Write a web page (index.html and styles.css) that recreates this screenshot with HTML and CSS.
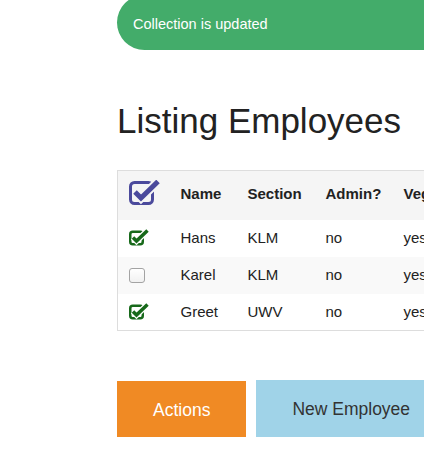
FILE: index.html
```html
<!DOCTYPE html>
<html>
<head>
<meta charset="utf-8">
<link rel="stylesheet" href="styles.css">
</head>
<body>
<div class="viewport">
  <div class="page">
    <div class="alert">Collection is updated</div>
    <h1 class="title">Listing Employees</h1>
    <table class="grid">
      <colgroup>
        <col class="c-check"><col class="c-name"><col class="c-section"><col class="c-admin"><col class="c-veg"><col class="c-rest">
      </colgroup>
      <thead>
        <tr>
          <th>
            <svg class="icon-all" width="32" height="29" viewBox="0 0 32 29">
              <rect x="2.5" y="2.5" width="22" height="21" rx="4" fill="none" stroke="#4b4a9c" stroke-width="3"/>
              <polyline points="7,12 13,18 30,1.5" fill="none" stroke="#f5f5f5" stroke-width="9"/>
              <polyline points="7,12 13,18 30,1.5" fill="none" stroke="#4b4a9c" stroke-width="5"/>
            </svg>
          </th>
          <th>Name</th>
          <th>Section</th>
          <th>Admin?</th>
          <th>Vegetarian?</th>
          <th>Actions</th>
        </tr>
      </thead>
      <tbody>
        <tr>
          <td>
            <svg class="icon-row" width="22" height="18" viewBox="0 0 22 18">
              <rect x="2.25" y="2.75" width="12.5" height="12.5" rx="2.5" fill="none" stroke="#17691a" stroke-width="2.5"/>
              <polyline points="5,8.5 8.5,12 19.5,1.5" fill="none" stroke="#ffffff" stroke-width="6"/>
              <polyline points="5,8.5 8.5,12 19.5,1.5" fill="none" stroke="#17691a" stroke-width="3.5"/>
            </svg>
          </td>
          <td>Hans</td><td>KLM</td><td>no</td><td>yes</td><td>edit</td>
        </tr>
        <tr>
          <td><span class="box"></span></td>
          <td>Karel</td><td>KLM</td><td>no</td><td>yes</td><td>edit</td>
        </tr>
        <tr>
          <td>
            <svg class="icon-row" width="22" height="18" viewBox="0 0 22 18">
              <rect x="2.25" y="2.75" width="12.5" height="12.5" rx="2.5" fill="none" stroke="#17691a" stroke-width="2.5"/>
              <polyline points="5,8.5 8.5,12 19.5,1.5" fill="none" stroke="#ffffff" stroke-width="6"/>
              <polyline points="5,8.5 8.5,12 19.5,1.5" fill="none" stroke="#17691a" stroke-width="3.5"/>
            </svg>
          </td>
          <td>Greet</td><td>UWV</td><td>no</td><td>yes</td><td>edit</td>
        </tr>
      </tbody>
    </table>
    <div class="buttons">
      <a class="btn btn-actions">Actions</a>
      <a class="btn btn-new">New Employee</a>
    </div>
  </div>
</div>
</body>
</html>
```
FILE: styles.css
```css
html, body {
  margin: 0;
  padding: 0;
  background: #ffffff;
  overflow: hidden;
}
.viewport {
  width: 424px;
  height: 464px;
  overflow: hidden;
}
.page {
  margin-left: 117px;
  width: 700px;
  font-family: "Liberation Sans", Arial, sans-serif;
  color: #222222;
}
.alert {
  margin-top: -5px;
  padding: 19px 16px 16px;
  line-height: 20px;
  font-size: 14.5px;
  color: #ffffff;
  background: #43ac6a;
  border-radius: 28px;
}
.title {
  margin: 50px 0 28px;
  font-size: 35px;
  line-height: 42px;
  font-weight: normal;
  color: #222222;
}
.grid {
  border-collapse: collapse;
  table-layout: fixed;
  width: 700px;
  border: 1px solid #dddddd;
  font-size: 15px;
  line-height: 18px;
}
.c-check { width: 53px; }
.c-name { width: 67px; }
.c-section { width: 78px; }
.c-admin { width: 78px; }
.c-veg { width: 120px; }
.grid thead tr {
  background: #f5f5f5;
  height: 49px;
}
.grid th {
  text-align: left;
  font-weight: bold;
  padding: 8px 10px 10px;
  vertical-align: middle;
  white-space: nowrap;
}
.grid tbody tr {
  height: 37px;
  background: #ffffff;
}
.grid tbody tr:nth-child(even) {
  background: #f9f9f9;
}
.grid td {
  padding: 0 10px;
  vertical-align: middle;
  white-space: nowrap;
}
.icon-all {
  display: block;
  margin-left: 0;
}
.icon-row {
  display: block;
}
.box {
  display: block;
  width: 14px;
  height: 13px;
  margin-left: 1px;
  border: 1px solid #a3a3a3;
  border-radius: 3px;
  background: linear-gradient(#ffffff, #f1f1f1);
}
.buttons {
  display: flex;
  gap: 10px;
  margin-top: 50px;
}
.btn {
  display: block;
  padding: 19px 36px 17px;
  line-height: 20px;
  font-size: 17.5px;
  white-space: nowrap;
}
.btn-actions {
  background: #f08a24;
  color: #ffffff;
}
.btn-new {
  background: #a0d3e8;
  color: #333333;
  margin-top: -1px;
}
```
